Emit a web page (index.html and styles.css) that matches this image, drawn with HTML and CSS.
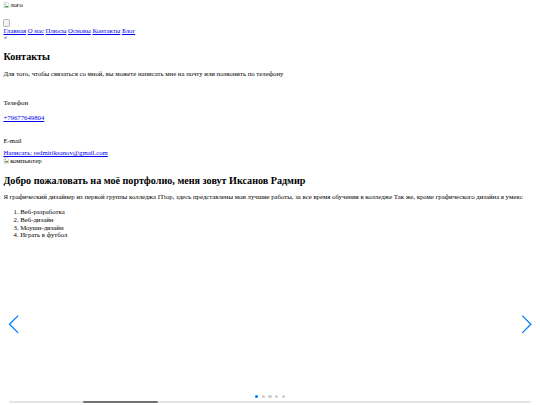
FILE: index.html
```html
<!DOCTYPE html>
<html lang="ru">
<head>
<meta charset="utf-8">
<title>Портфолио</title>
<link rel="stylesheet" href="styles.css">
</head>
<body>
<header class="header">
  <div class="logo">
    <span class="broken"><svg class="broken-icon" viewBox="0 0 16 16" aria-hidden="true"><path d="M2.5 1.5h8l3 3v10h-11z" fill="#fff" stroke="#9a9a9a"/><path d="M4 11l3-3 2 2 1.5-1.5L12 10v3H4z" fill="#5d9c4a"/><circle cx="6" cy="5.5" r="1.2" fill="#4a8fd9"/></svg><span>лого</span></span>
  </div>
  <nav class="nav">
    <button class="burger" type="button" aria-label="Меню"></button>
    <div class="menu"><a href="#">Главная</a> <a href="#">О нас</a> <a href="#">Плюсы</a> <a href="#">Основы</a> <a href="#">Контакты</a> <a href="#">Блог</a></div>
    <div class="close">×</div>
  </nav>
</header>

<section class="contacts">
  <h2 class="title title-contacts">Контакты</h2>
  <p class="text text-lead">Для того, чтобы связаться со мной, вы можете написать мне на почту или позвонить по телефону</p>
  <div class="item item-phone">
    <p class="text">Телефон</p>
    <a class="item-link item-link-phone" href="#">+79677649804</a>
  </div>
  <div class="item item-mail">
    <p class="text">E-mail</p>
    <a class="item-link item-link-mail" href="#">Написать: redmiriksanov@gmail.com</a>
  </div>
</section>

<div class="picture">
  <span class="broken"><svg class="broken-icon" viewBox="0 0 16 16" aria-hidden="true"><path d="M2.5 1.5h8l3 3v10h-11z" fill="#fff" stroke="#9a9a9a"/><path d="M4 11l3-3 2 2 1.5-1.5L12 10v3H4z" fill="#5d9c4a"/><circle cx="6" cy="5.5" r="1.2" fill="#4a8fd9"/></svg><span>компьютер</span></span>
</div>

<section class="about">
  <h2 class="title title-about">Добро пожаловать на моё портфолио, меня зовут Иксанов Радмир</h2>
  <p class="text text-about">Я графический дизайнер из первой группы колледжа ITtop, здесь представлены мои лучшие работы, за все время обучения в колледже Так же, кроме графического дизайна я умею:</p>
  <ol class="skills">
    <li>Веб-разработка</li>
    <li>Веб-дизайн</li>
    <li>Моушн-дизайн</li>
    <li>Играть в футбол</li>
  </ol>
</section>

<div class="slider">
  <div class="slides"></div>
  <button class="arrow arrow-prev" type="button" aria-label="Назад"><svg viewBox="0 0 27 44"><polyline points="24,1.5 3.5,22 24,42.5" fill="none" stroke="#007aff" stroke-width="3"/></svg></button>
  <button class="arrow arrow-next" type="button" aria-label="Вперёд"><svg viewBox="0 0 27 44"><polyline points="3,1.5 23.5,22 3,42.5" fill="none" stroke="#007aff" stroke-width="3"/></svg></button>
  <div class="dots"><span class="dot dot-active"></span><span class="dot"></span><span class="dot"></span><span class="dot"></span><span class="dot"></span></div>
  <div class="scrollbar"><div class="drag"></div></div>
</div>
</body>
</html>
```

FILE: styles.css
```css
html {
  font-size: 6.75px;
}

body {
  margin: 0 3.375px;
  font-family: "Liberation Serif", "Times New Roman", serif;
  font-size: 6.75px;
  line-height: 1.15;
  color: #000;
  background: #fff;
}

a {
  color: #0000ee;
}

p,
h2,
ol {
  margin: 0;
}

/* header */
.logo {
  margin-top: 1px;
  height: 7.76px;
}

.broken {
  display: inline-flex;
  align-items: center;
  color: #000;
}

.broken-icon {
  display: block;
  flex: none;
  width: 6.75px;
  height: 6.75px;
}

.burger {
  display: block;
  margin-top: 10.24px;
  width: 6.75px;
  height: 7.6px;
  padding: 0;
  border: 1px solid #b5b5b5;
  border-radius: 1.5px;
  background: #f3f3f3;
}

.close {
  height: 7.76px;
}

/* contacts */
.title {
  font-size: 10.125px;
  font-weight: bold;
  line-height: 1.15;
}

.title-contacts {
  margin-top: 9.34px;
}

.text-lead {
  margin-top: 7.24px;
}

.item-phone {
  margin-top: 20.94px;
}

.item-link {
  display: block;
  width: max-content;
}

.item-link-phone {
  margin-top: 7.34px;
}

.item-mail {
  margin-top: 15.24px;
}

.item-link-mail {
  margin-top: 4.24px;
}

.picture {
  height: 7.76px;
}

/* about */
.title-about {
  margin-top: 10.36px;
}

.text-about {
  margin-top: 6.24px;
}

.skills {
  margin-top: 7.7px;
  padding-left: 16.875px;
}

/* slider */
.slider {
  position: relative;
  margin-top: 5.35px;
  height: 160px;
}

.slides {
  height: 100%;
}

.arrow {
  position: absolute;
  top: 50%;
  margin-top: -9.28px;
  width: 11.39px;
  height: 18.56px;
  padding: 0;
  border: 0;
  background: none;
  cursor: pointer;
}

.arrow svg {
  display: block;
  width: 100%;
  height: 100%;
}

.arrow-prev {
  left: 4.22px;
}

.arrow-next {
  right: 4.22px;
}

.dots {
  position: absolute;
  left: 0;
  right: 0;
  bottom: 6.6px;
  display: flex;
  justify-content: center;
  gap: 3.375px;
}

.dot {
  display: block;
  width: 3.375px;
  height: 3.375px;
  border-radius: 50%;
  background: #000;
  opacity: 0.2;
}

.dot-active {
  background: #007aff;
  opacity: 1;
}

.scrollbar {
  position: absolute;
  left: 1%;
  bottom: 1.27px;
  width: 98%;
  height: 2.1px;
  border-radius: 4px;
  background: rgba(0, 0, 0, 0.1);
}

.drag {
  margin-left: 14.2857%;
  width: 14.2857%;
  height: 100%;
  border-radius: 4px;
  background: rgba(0, 0, 0, 0.5);
}
```
